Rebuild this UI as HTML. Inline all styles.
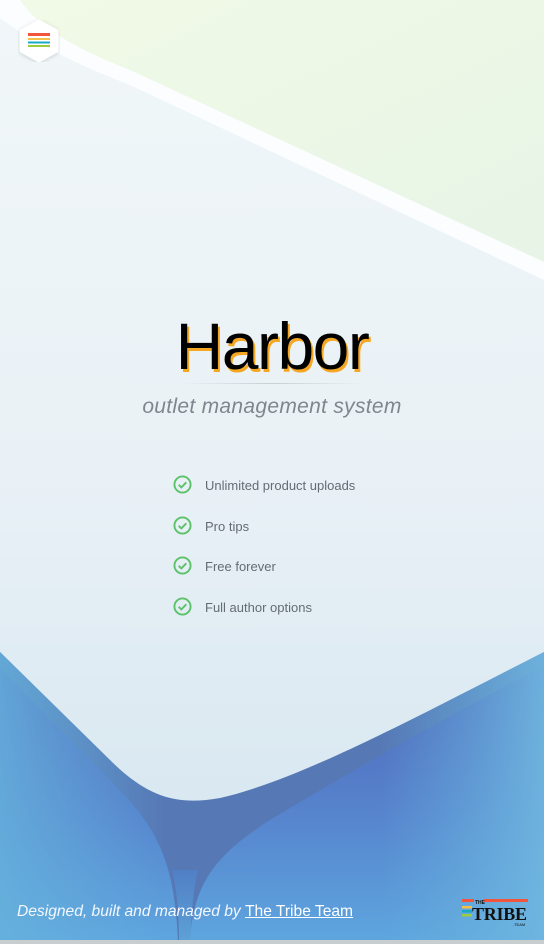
<!DOCTYPE html>
<html><head><meta charset="utf-8"><style>
html,body{margin:0;padding:0}
body{width:544px;height:944px;position:relative;overflow:hidden;font-family:"Liberation Sans",sans-serif;background:#eef4f6}
svg.bg{position:absolute;left:0;top:0}
.logo{position:absolute;left:18px;top:20px;width:42px;height:42px}
h1{position:absolute;left:0;width:544px;top:308px;margin:0;text-align:center;font-size:66px;font-weight:400;color:#000;letter-spacing:-1.5px;text-shadow:2px 3px 0 #f5a623}
.hr{position:absolute;left:180px;width:184px;top:383px;height:1px;background:linear-gradient(90deg,transparent,#c9cfd2,transparent)}
.sub{position:absolute;left:0;width:544px;top:395px;text-align:center;font-size:21px;font-style:italic;color:#80868e;letter-spacing:.3px}
ul{position:absolute;left:173px;top:475px;margin:0;padding:0;list-style:none}
li{height:40.5px;display:flex;align-items:flex-start;font-size:13px;color:#656b73}
li svg{margin-right:13px}
li span{margin-top:3px}
.foot{position:absolute;left:17px;top:903px;font-size:15.6px;color:#f4f8ff;font-style:italic}
.foot a{color:#fff;font-style:normal;text-decoration:underline}
.tribe{position:absolute;left:462px;top:896px}
.bot{position:absolute;left:0;top:940px;width:544px;height:4px;background:#c8cdd0}
</style></head><body>
<svg class="bg" width="544" height="944" viewBox="0 0 544 944">
<defs>
<linearGradient id="g1" x1="0" y1="0" x2="0" y2="1"><stop offset="0" stop-color="#f1f7f9"/><stop offset="0.5" stop-color="#e9f1f6"/><stop offset="1" stop-color="#d2e4ef"/></linearGradient>
<linearGradient id="gr" x1="0" y1="0" x2="1" y2="1"><stop offset="0" stop-color="#f1fae6"/><stop offset="1" stop-color="#e7f4e6"/></linearGradient>
<linearGradient id="bl" x1="0" y1="0" x2="0" y2="1"><stop offset="0" stop-color="#4f65b8"/><stop offset="0.5" stop-color="#5682cc"/><stop offset="1" stop-color="#5ea6df"/></linearGradient>
<linearGradient id="bl2" x1="0" y1="0" x2="1" y2="0"><stop offset="0" stop-color="#66b3dd" stop-opacity="0.8"/><stop offset="0.3" stop-color="#66b3dd" stop-opacity="0"/><stop offset="0.7" stop-color="#66b3dd" stop-opacity="0"/><stop offset="1" stop-color="#70b8e0" stop-opacity="0.9"/></linearGradient>
<linearGradient id="st" x1="0" y1="0" x2="0" y2="1"><stop offset="0" stop-color="#5080c8"/><stop offset="1" stop-color="#5eaadd"/></linearGradient>
<clipPath id="cb"><path d="M0,652 L110,760 C150,800 180,805 220,798 C300,780 420,715 544,652 L544,944 L0,944 Z"/></clipPath>
</defs>
<rect width="544" height="944" fill="url(#g1)"/>
<path d="M0,0 L544,0 L544,262 L130,70 C80,50 40,30 20,0 Z" fill="url(#gr)"/>
<path d="M20,0 C40,30 80,50 130,70 L544,262 L544,280 L130,85 C70,62 30,40 0,18 L0,0 Z" fill="#fbfdfe"/>
<g clip-path="url(#cb)">
<rect x="0" y="640" width="544" height="304" fill="#5679b6"/>
<path d="M0,668 L105,775 C150,820 175,850 178,944 L0,944 Z" fill="url(#bl)"/>
<path d="M544,666 C430,725 320,790 270,820 C215,855 192,885 190,944 L544,944 Z" fill="url(#bl)"/>
<rect x="0" y="640" width="544" height="304" fill="url(#bl2)"/>
<path d="M172,870 C177,890 179,915 179,944 L191,944 C191,915 193,890 198,870 Z" fill="url(#st)" opacity="0.85"/>
</g>
</svg>
<svg class="logo" viewBox="0 0 42 42"><polygon points="21,1 39,11 39,31 21,41 3,31 3,11" fill="#fff" stroke="#fff" stroke-width="3" stroke-linejoin="round" style="filter:drop-shadow(0 1px 2px rgba(0,0,0,.15))"/>
<rect x="10" y="13" width="22" height="3" fill="#f2553b"/><rect x="10" y="18" width="22" height="2" fill="#f5c04a"/><rect x="10" y="21.5" width="22" height="2" fill="#1aa8c8"/><rect x="10" y="25" width="22" height="2" fill="#9ccc3d"/></svg>
<h1>Harbor</h1>
<div class="hr"></div>
<div class="sub">outlet management system</div>
<ul>
<li><svg width="19" height="19" viewBox="0 0 20 20"><circle cx="10" cy="10" r="8.5" fill="none" stroke="#5cc26a" stroke-width="2"/><path d="M6 10.3l2.8 2.8 5.2-5.4" fill="none" stroke="#5cc26a" stroke-width="2"/></svg><span>Unlimited product uploads</span></li>
<li><svg width="19" height="19" viewBox="0 0 20 20"><circle cx="10" cy="10" r="8.5" fill="none" stroke="#5cc26a" stroke-width="2"/><path d="M6 10.3l2.8 2.8 5.2-5.4" fill="none" stroke="#5cc26a" stroke-width="2"/></svg><span>Pro tips</span></li>
<li><svg width="19" height="19" viewBox="0 0 20 20"><circle cx="10" cy="10" r="8.5" fill="none" stroke="#5cc26a" stroke-width="2"/><path d="M6 10.3l2.8 2.8 5.2-5.4" fill="none" stroke="#5cc26a" stroke-width="2"/></svg><span>Free forever</span></li>
<li><svg width="19" height="19" viewBox="0 0 20 20"><circle cx="10" cy="10" r="8.5" fill="none" stroke="#5cc26a" stroke-width="2"/><path d="M6 10.3l2.8 2.8 5.2-5.4" fill="none" stroke="#5cc26a" stroke-width="2"/></svg><span>Full author options</span></li>
</ul>
<div class="foot">Designed, built and managed by <a>The Tribe Team</a></div>
<svg class="tribe" width="68" height="34" viewBox="0 0 68 34">
<rect x="0" y="3" width="12" height="3" fill="#f2553b"/><rect x="22" y="3" width="44" height="3" fill="#f2553b"/>
<text x="13" y="8" font-size="5" font-family="Liberation Sans" font-weight="bold" fill="#111">THE</text>
<rect x="0" y="10" width="10" height="2.5" fill="#f5c04a"/><rect x="0" y="14" width="10" height="2.5" fill="#1aa8c8"/><rect x="0" y="18" width="10" height="2.5" fill="#9ccc3d"/>
<text x="10" y="24" font-size="18" font-family="Liberation Serif" font-weight="bold" fill="#111" textLength="55">TRIBE</text>
<text x="51" y="30" font-size="4" font-family="Liberation Sans" fill="#111">.TEAM</text>
</svg>
<div class="bot"></div>
</body></html>
